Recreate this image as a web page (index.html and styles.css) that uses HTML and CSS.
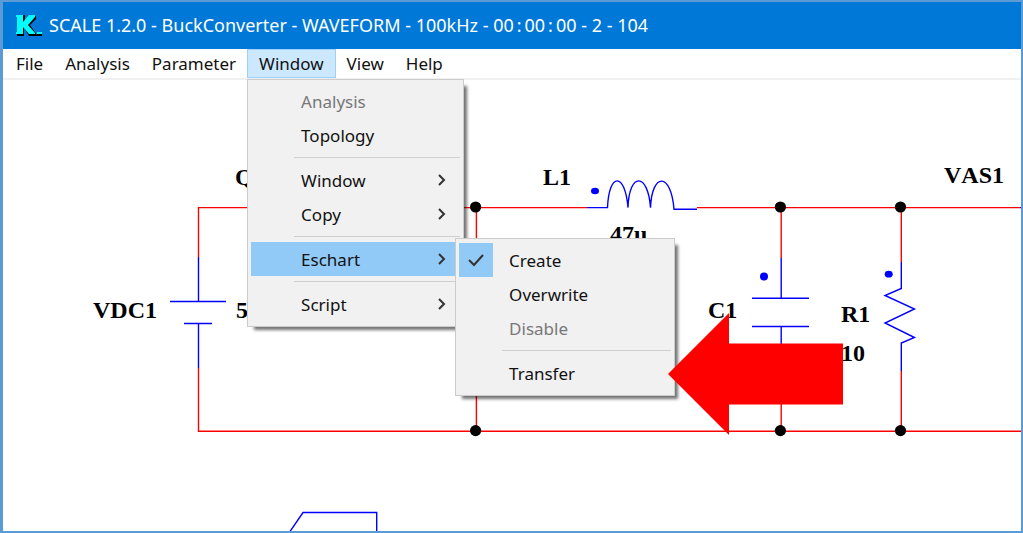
FILE: index.html
```html
<!DOCTYPE html>
<html lang="en">
<head>
  <meta charset="UTF-8" />
  <meta name="viewport" content="width=device-width, initial-scale=1.0" />
  <title>SCALE 1.2.0 - BuckConverter</title>
  <link rel="stylesheet" href="styles.css">
</head>
<body>
  <div class="window">
    <header class="title-bar">
      <svg class="app-icon" width="27" height="24" viewBox="0 0 27 24" aria-hidden="true">
        <path class="icon-shadow" d="M1 1h8v7l5-6h6v3l-6 6 7 10v1h-8l-5-8v8H1v-3zM21 20h5v2h-5z" />
        <path class="icon-face" d="M0 1h7v7l6-7h6v2l-7 8 7 8v1h-6l-6-7v7H0v-2h1V3H0zM21 18h5v2h-5z" />
      </svg>
      <span>SCALE 1.2.0 - BuckConverter - WAVEFORM - 100kHz - 00&#8201;:&#8201;00&#8201;:&#8201;00 - 2 - 104</span>
    </header>

    <nav class="menu-bar">
      <button type="button">File</button>
      <button type="button">Analysis</button>
      <button type="button">Parameter</button>
      <div class="menu-holder">
        <button type="button" class="open">Window</button>
        <ul class="menu">
          <li><button type="button" disabled>Analysis</button></li>
          <li><button type="button">Topology</button></li>
          <li class="separator"></li>
          <li><button type="button">Window<svg class="chevron" width="8" height="12" viewBox="0 0 8 12"><path d="M1 1l5 5-5 5" /></svg></button></li>
          <li><button type="button">Copy<svg class="chevron" width="8" height="12" viewBox="0 0 8 12"><path d="M1 1l5 5-5 5" /></svg></button></li>
          <li class="separator"></li>
          <li class="has-submenu">
            <button type="button" class="selected">Eschart<svg class="chevron" width="8" height="12" viewBox="0 0 8 12"><path d="M1 1l5 5-5 5" /></svg></button>
            <ul class="menu submenu">
              <li><button type="button" class="checked"><svg class="check" width="34" height="34" viewBox="0 0 34 34"><path d="M10 17l5 5 9-10" /></svg>Create</button></li>
              <li><button type="button">Overwrite</button></li>
              <li><button type="button" disabled>Disable</button></li>
              <li class="separator"></li>
              <li><button type="button">Transfer</button></li>
            </ul>
          </li>
          <li class="separator"></li>
          <li><button type="button">Script<svg class="chevron" width="8" height="12" viewBox="0 0 8 12"><path d="M1 1l5 5-5 5" /></svg></button></li>
        </ul>
      </div>
      <button type="button">View</button>
      <button type="button">Help</button>
    </nav>

    <main class="canvas">
      <svg class="schematic" width="100%" height="100%">
        <!-- wires -->
        <g class="wire">
          <path d="M195.5 177V127.6H584M694 127.6H1017M195.5 288V351.2H1020" />
          <path d="M473.4 127V351M778.2 127V178M778.2 286V351M898.3 127V182M898.3 291V351" />
        </g>

        <!-- parts -->
        <g class="part">
          <path d="M195.5 177V221.5M167 221.5H223M181 243.5H209M195.5 243.5V288" />
          <path d="M584 127.6H604.5C606 92 622 92 625 127.6C626 92 645 92 647.5 127.6C649 92 668 92 671 129.2H694" />
          <path d="M778.2 178V218.3M749 218.3H806M749 246.5H806M778.2 246.5V286" />
          <path d="M898.3 182V208.5L882 215.5L911.5 229L882 243L911.5 257.5L898.3 263V291" />
          <path d="M286 453L300 432.5H373.7V453M1017 127.6H1020" />
        </g>
        <g class="polarity">
          <ellipse cx="592" cy="111" rx="4" ry="3.3" />
          <circle cx="761" cy="196.5" r="4" />
          <ellipse cx="885.7" cy="194.2" rx="4" ry="3.4" />
        </g>

        <!-- junctions -->
        <g class="junction">
          <circle cx="472.6" cy="127" r="5.6" />
          <circle cx="777.4" cy="127" r="5.6" />
          <circle cx="897.5" cy="127" r="5.6" />
          <circle cx="472.6" cy="350.6" r="5.6" />
          <circle cx="777.4" cy="350.6" r="5.6" />
          <circle cx="897.5" cy="350.6" r="5.6" />
        </g>

        <g class="label">
          <text x="90" y="238">VDC1</text>
          <text x="232" y="105">Q1</text>
          <text x="233" y="238">50</text>
          <text x="540" y="105">L1</text>
          <text x="607" y="162">47u</text>
          <text x="705" y="238">C1</text>
          <text x="838" y="242">R1</text>
          <text x="838" y="281">10</text>
          <text x="941" y="103">VAS1</text>
        </g>
      </svg>
    </main>

    <svg class="pointer" width="175" height="122" viewBox="0 0 175 122" aria-hidden="true">
      <path d="M0 61L61 0V30.5H175V91.5H61V122z" />
    </svg>
  </div>
</body>
</html>
```

FILE: styles.css
```css
* {
  box-sizing: border-box;
}

body {
  margin: 0;
  font-family: 'Noto Sans', 'Open Sans', sans-serif;
  font-size: 17px;
}

.window {
  position: relative;
  display: flex;
  flex-direction: column;
  height: 100vh;
  border: 2px solid #5b9bd5;
  border-left-width: 3px;
  background: #fff;
  overflow: hidden;
}

.title-bar {
  display: flex;
  align-items: center;
  gap: 6px;
  padding: 10px 13px;
  font-size: 18px;
  line-height: 27px;
  color: #fff;
  background: #0078d7;
  white-space: nowrap;
}

.app-icon {
  flex: none;
}

.icon-shadow {
  fill: #000;
}

.icon-face {
  fill: #0ff;
}

/* menu bar */
.menu-bar {
  display: flex;
  padding-left: 2px;
  border-bottom: 2px solid #f0f0f0;
}

button {
  border: none;
  background: none;
  font: inherit;
  color: #111;
  text-align: left;
}

.menu-bar > button,
.menu-holder > button {
  padding: 0 11px;
  line-height: 29px;
}

.menu-holder {
  position: relative;
}

.menu-holder > .open {
  border: 1px solid #99d1ff;
  background: #cce8ff;
  line-height: 27px;
}

/* drop-down menus */
.menu {
  position: absolute;
  top: 100%;
  left: 0;
  z-index: 1;
  width: 217px;
  margin: 1px 0 0;
  padding: 4px 3px 5px;
  border: 1px solid #ccc;
  background: #f1f1f1;
  box-shadow: 5px 5px 3px -2px rgba(0, 0, 0, 0.55);
  list-style: none;
}

.menu button {
  display: flex;
  align-items: center;
  justify-content: space-between;
  width: 100%;
  height: 34px;
  padding: 0 14px 0 50px;
}

.menu button:disabled {
  color: #787878;
}

.menu .selected {
  background: #91c9f7;
}

.separator {
  margin-left: 43px;
  padding: 5px 0;
}

.separator::before {
  content: "";
  display: block;
  height: 1px;
  background: #d0d0d0;
}

.has-submenu {
  position: relative;
}

.submenu {
  top: -5px;
  left: 204px;
  width: 220px;
}

.menu .checked {
  justify-content: flex-start;
  gap: 16px;
  padding-left: 0;
}

.check {
  background: #91c9f7;
}

.chevron path,
.check path {
  fill: none;
  stroke: #333;
  stroke-width: 2;
}

/* schematic */
.canvas {
  flex: 1;
  min-height: 0;
}

.schematic {
  display: block;
}

.wire,
.part {
  fill: none;
  stroke: #f00;
  stroke-width: 1.4;
}

.part {
  stroke: #00f;
}

.polarity {
  fill: #00f;
}

.label {
  font: bold 24px 'Liberation Serif', serif;
  font-kerning: none;
}

.pointer {
  position: absolute;
  top: 311px;
  left: 665px;
  z-index: 2;
  fill: #f00;
}
```
